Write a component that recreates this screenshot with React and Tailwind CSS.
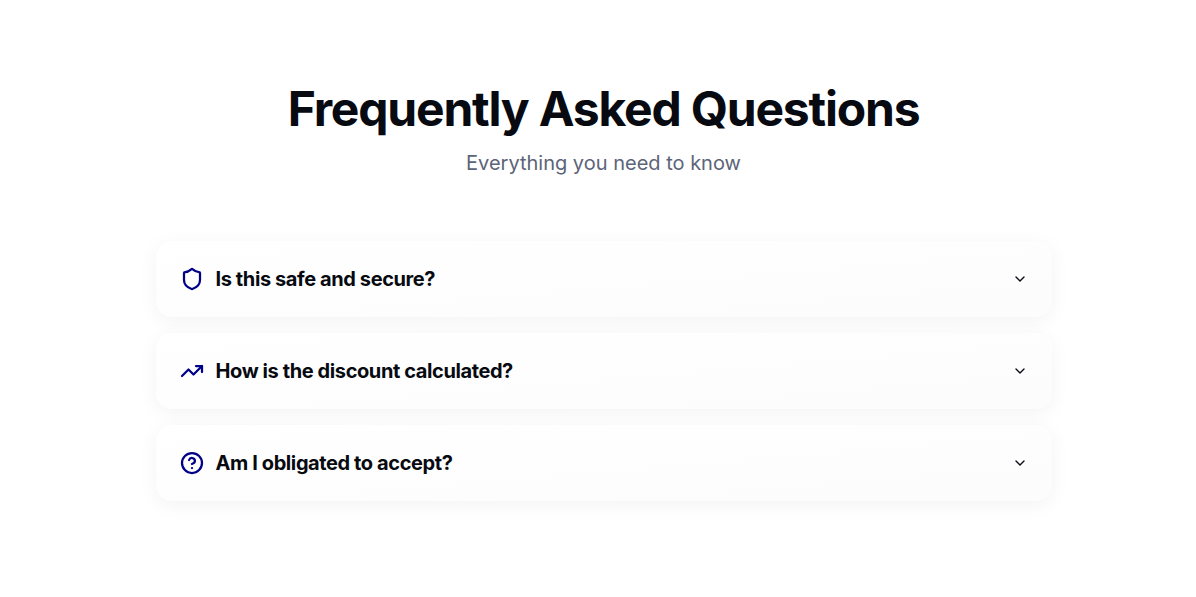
import { ShieldIcon, TrendingUp, CircleHelp, ChevronDown } from 'lucide-react';

const faqs = [
  { icon: ShieldIcon, question: 'Is this safe and secure?' },
  { icon: TrendingUp, question: 'How is the discount calculated?' },
  { icon: CircleHelp, question: 'Am I obligated to accept?' },
];

export default function App() {
  return (
    <section className="bg-white min-h-[597px] pt-[85px] pl-[11px] font-['Inter',sans-serif]">
      <div className="max-w-[896px] mx-auto">
        {/* Heading */}
        <div className="text-center mb-16">
          <h2 className="text-5xl leading-[48px] font-bold tracking-tight text-[#070a10] mb-4">
            Frequently Asked Questions
          </h2>
          <p className="text-xl leading-7 text-[#5b6478]">Everything you need to know</p>
        </div>

        {/* Accordion rows */}
        <div className="flex flex-col gap-4">
          {faqs.map((faq) => (
            <div
              key={faq.question}
              className="h-[76px] px-6 flex items-center justify-between rounded-2xl bg-gradient-to-br from-white to-[#fcfcfc] shadow-[0_4px_20px_rgba(0,0,0,0.05)]"
            >
              <div className="flex items-center gap-3">
                <faq.icon size={24} strokeWidth={2.25} className="text-[#000088]" />
                <span className="text-xl font-bold tracking-[-0.4px] text-[#070a10]">{faq.question}</span>
              </div>
              <ChevronDown size={16} className="text-[#070a10]" />
            </div>
          ))}
        </div>
      </div>
    </section>
  );
}
